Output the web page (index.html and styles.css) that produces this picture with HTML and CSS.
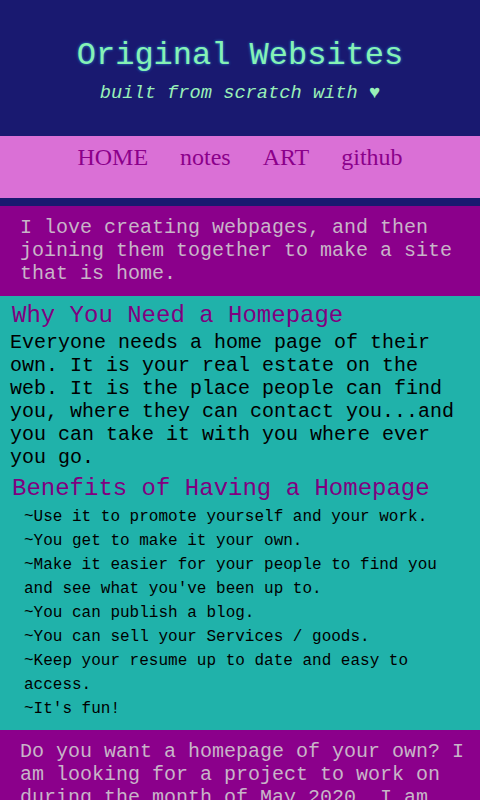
FILE: index.html
```html
<!DOCTYPE html>
<html>
<head>
<meta charset="utf-8">
<title>Original Websites</title>
<link rel="stylesheet" href="styles.css">
</head>
<body>
<header class="site-header">
  <h1 class="title">Original Websites</h1>
  <p class="tagline">built from scratch with ♥</p>
</header>
<nav class="nav">
  <a href="#">HOME</a>
  <a href="#">notes</a>
  <a href="#">ART</a>
  <a href="#">github</a>
</nav>
<div class="spacer"></div>
<section class="intro">
  <p>I love creating webpages, and then joining them together to make a site that is home.</p>
</section>
<section class="main">
  <h2 class="heading first">Why You Need a Homepage</h2>
  <p class="body-text">Everyone needs a home page of their own. It is your real estate on the web. It is the place people can find you, where they can contact you...and you can take it with you where ever you go.</p>
  <h2 class="heading">Benefits of Having a Homepage</h2>
  <ul class="benefits">
    <li>~Use it to promote yourself and your work.</li>
    <li>~You get to make it your own.</li>
    <li>~Make it easier for your people to find you and see what you've been up to.</li>
    <li>~You can publish a blog.</li>
    <li>~You can sell your Services / goods.</li>
    <li>~Keep your resume up to date and easy to access.</li>
    <li>~It's fun!</li>
  </ul>
</section>
<section class="intro">
  <p>Do you want a homepage of your own? I am looking for a project to work on during the month of May 2020. I am happy to help you build something that is truly yours.</p>
</section>
</body>
</html>
```
FILE: styles.css
```css
html, body {
  margin: 0;
  padding: 0;
}
body {
  background: #191970;
  font-family: "Liberation Mono", monospace;
}
.site-header {
  background: #191970;
  padding: 37px 0 32px;
  text-align: center;
}
.title {
  margin: 0;
  font-size: 32px;
  font-weight: normal;
  line-height: 38px;
  color: #86f2b4;
  text-shadow: 0 0 3px #2a8cd8;
}
.tagline {
  margin: 7px 0 0;
  font-size: 18.7px;
  font-style: italic;
  line-height: 22px;
  color: #98f0b8;
}
.nav {
  background: #da70d6;
  height: 62px;
  box-sizing: border-box;
  padding-top: 7px;
  display: flex;
  justify-content: center;
  gap: 32px;
  font-family: "Liberation Serif", serif;
  font-size: 24px;
  line-height: 28px;
}
.nav a {
  color: #8b008b;
  text-decoration: none;
}
.spacer {
  height: 8px;
  background: #191970;
}
.intro {
  background: #8b008b;
  padding: 10px 8px 11px 20px;
}
.intro p {
  margin: 0;
  font-size: 20px;
  line-height: 23px;
  color: #c8b4c8;
}
.main {
  background: #20b2aa;
  padding: 6px 10px 9px;
}
.heading {
  margin: 0 0 0 2px;
  font-size: 24px;
  font-weight: normal;
  line-height: 28px;
  color: #800080;
}
.heading.first {
  margin-bottom: 1px;
}
.body-text {
  margin: 0 0 6px;
  font-size: 20px;
  line-height: 23px;
  color: #000;
}
.benefits {
  list-style: none;
  margin: 0;
  padding: 2px 0 0 14px;
  font-size: 16px;
  line-height: 24px;
  color: #000;
}
```
